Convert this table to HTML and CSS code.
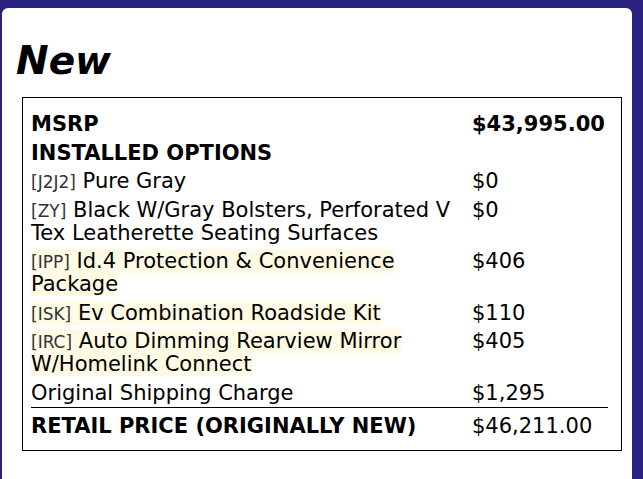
FILE: index.html
```html
<!DOCTYPE html>
<html>
<head>
<meta charset="utf-8">
<link rel="stylesheet" href="styles.css">
</head>
<body>
<div class="card">
  <h1 class="title">New</h1>
  <div class="box">
    <table class="price-table">
      <tr class="bold"><td class="desc">MSRP</td><td class="amt">$43,995.00</td></tr>
      <tr class="bold"><td class="desc">INSTALLED OPTIONS</td><td class="amt"></td></tr>
      <tr><td class="desc"><span class="code">[J2J2]</span> Pure Gray</td><td class="amt">$0</td></tr>
      <tr><td class="desc"><span class="code">[ZY]</span> Black W/Gray Bolsters, Perforated V Tex Leatherette Seating Surfaces</td><td class="amt">$0</td></tr>
      <tr><td class="desc"><span class="hl"><span class="code">[IPP]</span> Id.4 Protection &amp; Convenience Package</span></td><td class="amt">$406</td></tr>
      <tr><td class="desc"><span class="hl"><span class="code">[ISK]</span> Ev Combination Roadside Kit</span></td><td class="amt">$110</td></tr>
      <tr><td class="desc"><span class="hl"><span class="code">[IRC]</span> Auto Dimming Rearview Mirror W/Homelink Connect</span></td><td class="amt">$405</td></tr>
      <tr><td class="desc">Original Shipping Charge</td><td class="amt">$1,295</td></tr>
      <tr class="total"><td class="desc">RETAIL PRICE (ORIGINALLY NEW)</td><td class="amt">$46,211.00</td></tr>
    </table>
  </div>
</div>
</body>
</html>
```
FILE: styles.css
```css
html, body {
  margin: 0;
  padding: 0;
  background: #2a2180;
  height: 100%;
}
body {
  padding-top: 8px;
  box-sizing: border-box;
}
.card {
  margin-left: 2px;
  width: 630px;
  height: 480px;
  background: #ffffff;
  border-radius: 6px;
  padding: 1px 0 0 0;
  box-sizing: border-box;
}
.title {
  margin: 31px 0 0 14px;
  font-family: "DejaVu Sans", Verdana, sans-serif;
  font-weight: bold;
  font-style: italic;
  font-size: 39px;
  line-height: 42px;
  color: #000;
}
.box {
  margin: 15px 10px 0 20px;
  border: 1px solid #000;
  padding: 12px 13px 9px 8px;
}
.price-table {
  width: 100%;
  border-collapse: collapse;
  font-family: "DejaVu Sans", Verdana, sans-serif;
  font-size: 21px;
  line-height: 23px;
  color: #000;
}
.price-table td {
  padding: 3px 0 2.5px 0;
  vertical-align: top;
}
.desc {
  width: 441px;
  padding-right: 0;
}
.amt {
  white-space: nowrap;
}
.bold td {
  font-weight: bold;
}
.code {
  font-size: 17px;
  line-height: 1;
  color: #333;
}
.hl {
  background: #fdfbe3;
}
.total td {
  border-top: 1px solid #000;
  padding-top: 7px;
  font-weight: bold;
}
.total .amt {
  font-weight: normal;
}
```
